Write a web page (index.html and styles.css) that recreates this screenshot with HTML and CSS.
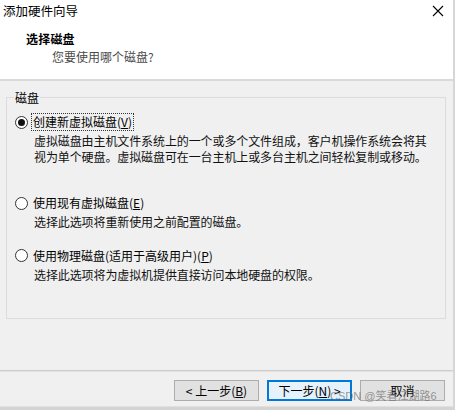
FILE: index.html
```html
<!DOCTYPE html>
<html lang="zh-CN">
<head>
<meta charset="utf-8">
<title>添加硬件向导</title>
<link rel="stylesheet" href="styles.css">
</head>
<body>
<div class="window">
  <div class="header">
    <div class="titlebar">
      <span class="title">添加硬件向导</span>
      <svg class="close" width="12" height="12" viewBox="0 0 12 12"><path d="M1 1 L11 11 M11 1 L1 11" stroke="#000" stroke-width="1.1" fill="none"/></svg>
    </div>
    <div class="heading">选择磁盘</div>
    <div class="subheading">您要使用哪个磁盘?</div>
  </div>
  <div class="content">
    <div class="group">
      <div class="legend">磁盘</div>
      <div class="option first">
        <div class="radio-row">
          <span class="radio checked"></span>
          <span class="label focus">创建新虚拟磁盘(<u>V</u>)</span>
        </div>
        <div class="desc">虚拟磁盘由主机文件系统上的一个或多个文件组成，客户机操作系统会将其<br>视为单个硬盘。虚拟磁盘可在一台主机上或多台主机之间轻松复制或移动。</div>
      </div>
      <div class="option second">
        <div class="radio-row">
          <span class="radio"></span>
          <span class="label">使用现有虚拟磁盘(<u>E</u>)</span>
        </div>
        <div class="desc">选择此选项将重新使用之前配置的磁盘。</div>
      </div>
      <div class="option third">
        <div class="radio-row">
          <span class="radio"></span>
          <span class="label">使用物理磁盘(适用于高级用户)(<u>P</u>)</span>
        </div>
        <div class="desc">选择此选项将为虚拟机提供直接访问本地硬盘的权限。</div>
      </div>
    </div>
  </div>
  <div class="footer">
    <button class="btn">&lt; 上一步(<u>B</u>)</button>
    <button class="btn default">下一步(<u>N</u>) &gt;</button>
    <button class="btn">取消</button>
  </div>
  <div class="bottom-edge"></div>
  <div class="watermark">CSDN @笑看江湖路6</div>
</div>
</body>
</html>
```

FILE: styles.css
```css
* { box-sizing: border-box; }
html, body {
  margin: 0;
  padding: 0;
  background: #f0f0f0;
}
body {
  font-family: "Noto Sans CJK SC", "Noto Sans", sans-serif;
  font-size: 12px;
  color: #000;
}
.window {
  position: relative;
  width: 455px;
  height: 410px;
  background: #f0f0f0;
  border-right: 2px solid #d6d6d6;
  display: flex;
  flex-direction: column;
  overflow: hidden;
}
.header {
  background: #fff;
  height: 81px;
  border-bottom: 2px solid #d9d9d9;
  flex: none;
}
.titlebar {
  height: 21px;
  display: flex;
  align-items: center;
  justify-content: space-between;
  padding: 0 9px 0 3px;
}
.title {
  font-size: 12.5px;
  line-height: 21px;
}
.close { display: block; margin-top: 1px; }
.heading {
  font-weight: bold;
  padding-left: 26px;
  margin-top: 10px;
  line-height: 15px;
  letter-spacing: 0.2px;
}
.subheading {
  padding-left: 52px;
  margin-top: 3px;
  line-height: 15px;
  color: #4a4a4a;
}
.content {
  flex: none;
  padding: 16px 0 0 6px;
}
.group {
  width: 440px;
  height: 222px;
  border: 1px solid #dcdcdc;
  padding: 0 0 0 8px;
}
.legend {
  display: block;
  width: max-content;
  height: 15px;
  margin-top: -8px;
  margin-left: -1px;
  padding: 0 1px;
  background: #f0f0f0;
  line-height: 15px;
}
.option.first { margin-top: 8px; }
.option.second { margin-top: 30px; }
.option.third { margin-top: 17px; }
.radio-row {
  display: flex;
  align-items: center;
  height: 18px;
}
.radio {
  width: 13px;
  height: 13px;
  border-radius: 50%;
  border: 1px solid #333;
  background: #fff;
  flex: none;
  position: relative;
}
.radio.checked::after {
  content: "";
  position: absolute;
  left: 2px;
  top: 2px;
  width: 7px;
  height: 7px;
  border-radius: 50%;
  background: #111;
}
.label {
  margin-left: 3px;
  line-height: 16px;
  padding: 0 1px;
  border: 1px solid transparent;
}
.label.focus { border: 1px dotted #333; }
.label u, .btn u { text-decoration: underline; }
.desc {
  padding-left: 19px;
  line-height: 15.5px;
  margin-top: 2px;
  letter-spacing: -0.1px;
  color: #111;
}
.footer {
  flex: none;
  margin-top: 51px;
  border-top: 1px solid #cdcdcd;
  box-shadow: inset 0 1px #e2e2e2;
  display: flex;
  justify-content: flex-end;
  gap: 8px;
  padding: 9px 8px 0 0;
  height: 36px;
}
.btn {
  width: 85px;
  height: 21px;
  border: 1px solid #adadad;
  background: #e1e1e1;
  font-family: "Noto Sans CJK SC", "Noto Sans", sans-serif;
  font-size: 12px;
  color: #000;
  padding: 0;
  line-height: 19px;
}
.btn.default {
  border: 1px solid #0078d7;
  box-shadow: inset 0 0 0 1px #0078d7;
  background: #e5f1fb;
}
.bottom-edge {
  flex: 1;
  border-top: 1px solid #e0e0e0;
  background: #d4d4d4;
}
.watermark {
  position: absolute;
  left: 330px;
  top: 388px;
  font-size: 11px;
  line-height: 16px;
  color: rgba(110, 110, 110, 0.7);
  font-family: "Liberation Sans", "Noto Sans CJK SC", sans-serif;
  white-space: nowrap;
}
```
